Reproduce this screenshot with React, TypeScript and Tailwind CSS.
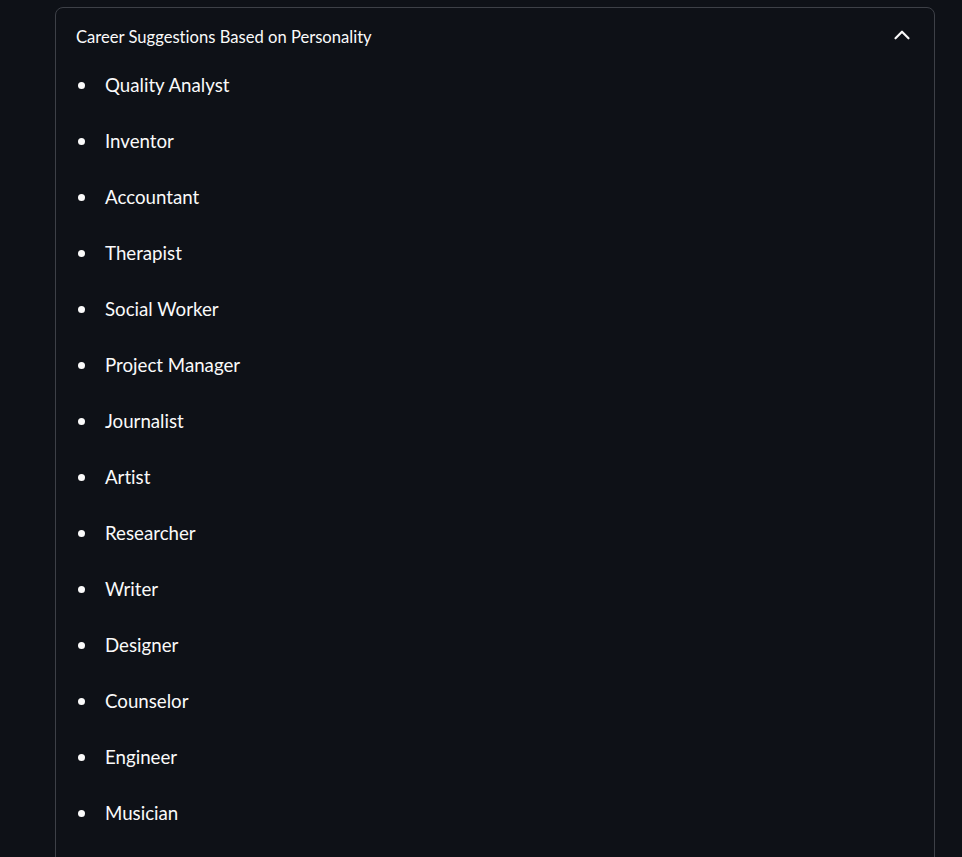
import React from "react";

const items = [
  "Quality Analyst",
  "Inventor",
  "Accountant",
  "Therapist",
  "Social Worker",
  "Project Manager",
  "Journalist",
  "Artist",
  "Researcher",
  "Writer",
  "Designer",
  "Counselor",
  "Engineer",
  "Musician",
];

export default function App() {
  return (
    <div
      className="min-h-[857px] h-[857px] overflow-hidden bg-[#0e1117] pl-[55px] pt-[7px] [font-variant-ligatures:none]"
      style={{ fontFamily: "Lato, 'Liberation Sans', sans-serif" }}
    >
      <div className="w-[880px] h-[900px] rounded-[8px] border border-[#3d4047]">
        <div className="flex items-center justify-between pl-[20px] pr-[19px] pt-[17px]">
          <span className="text-[16.6px] leading-[24px] text-[#fafafa]">
            Career Suggestions Based on Personality
          </span>
          <svg className="-mt-[5px]" width="26" height="26" viewBox="0 0 24 24" fill="none" stroke="#fafafa" strokeWidth="2" strokeLinecap="round" strokeLinejoin="round">
            <path d="M6 15l6-6 6 6" />
          </svg>
        </div>
        <ul className="pt-[8px] pl-[22px]">
          {items.map((t) => (
            <li key={t} className="h-[56px] flex items-center text-[18.7px] text-[#fafafa]">
              <span className="w-[7px] h-[7px] rounded-full bg-[#fafafa] mr-[20px]" />
              <span>{t}</span>
            </li>
          ))}
        </ul>
      </div>
    </div>
  );
}
